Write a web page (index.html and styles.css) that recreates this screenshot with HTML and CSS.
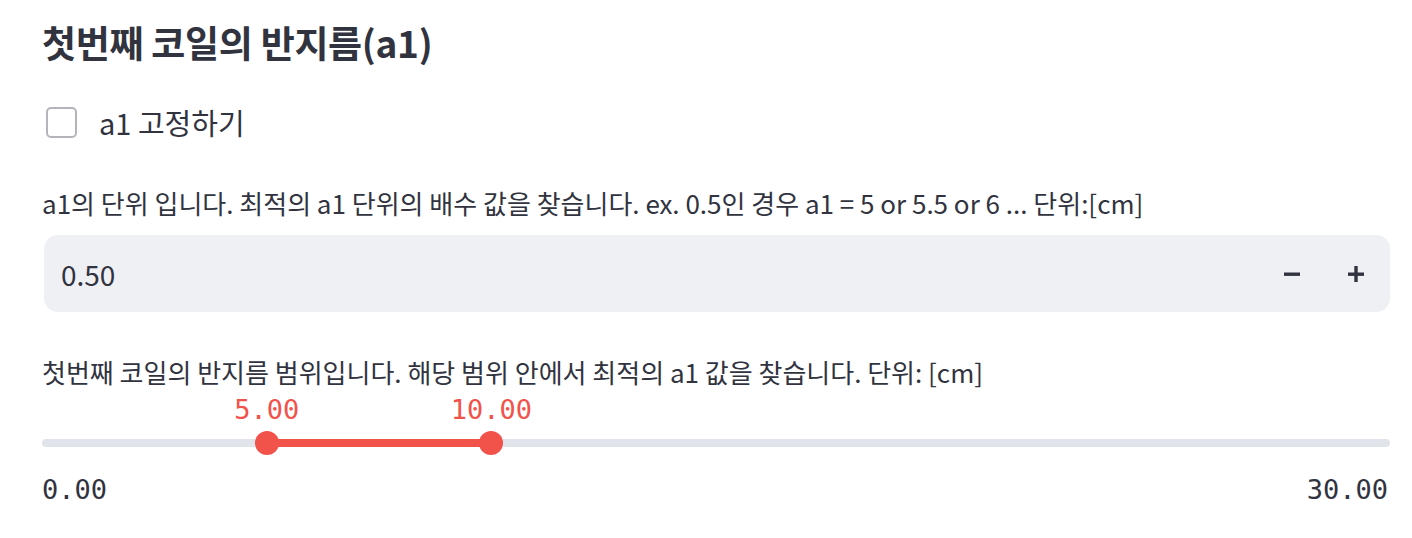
FILE: index.html
```html
<!DOCTYPE html>
<html>
  <head>
    <meta charset="utf-8">
    <title>a1 설정</title>
    <link rel="stylesheet" href="styles.css">
  </head>

  <body>
    <div id="main">
      <h3 class="title">첫번째 코일의 반지름(a1)</h3>

      <label class="check">
        <span class="box"></span>
        <span class="check_text">a1 고정하기</span>
      </label>

      <p class="label" id="step_label">a1의 단위 입니다. 최적의 a1 단위의 배수 값을 찾습니다. ex. 0.5인 경우 a1 = 5 or 5.5 or 6 ... 단위:[cm]</p>
      <div class="number">
        <span class="number_value">0.50</span>
        <div class="steps">
          <button class="step" aria-label="minus">
            <svg width="18" height="18" viewBox="0 0 18 18"><rect x="1" y="7.5" width="16" height="3.4" fill="#31333f"/></svg>
          </button>
          <button class="step" aria-label="plus">
            <svg width="18" height="18" viewBox="0 0 18 18"><rect x="1" y="7.5" width="16" height="3.4" fill="#31333f"/><rect x="7.3" y="1" width="3.4" height="16" fill="#31333f"/></svg>
          </button>
        </div>
      </div>

      <p class="label" id="range_label">첫번째 코일의 반지름 범위입니다. 해당 범위 안에서 최적의 a1 값을 찾습니다. 단위: [cm]</p>
      <div class="slider">
        <div class="track">
          <div class="fill" style="left: 16.667%; width: 16.667%;"></div>
          <div class="thumb" style="left: 16.667%;"><span class="thumb_value">5.00</span></div>
          <div class="thumb" style="left: 33.333%;"><span class="thumb_value">10.00</span></div>
        </div>
        <div class="ticks">
          <span>0.00</span>
          <span>30.00</span>
        </div>
      </div>
    </div>
  </body>
</html>
```

FILE: styles.css
```css
body {
  margin: 0;
  background: #fff;
  color: #31333f;
  font-family: 'Noto Sans CJK KR', 'Noto Sans', sans-serif;
}

#main {
  display: flex;
  flex-direction: column;
  padding: 0 22px 0 42px;
}

.title {
  margin: 0;
  height: 84px;
  line-height: 84px;
  font-size: 37px;
  font-weight: 700;
  letter-spacing: -0.3px;
}

.check {
  display: flex;
  align-items: center;
  gap: 22px;
  margin-top: 20px;
  height: 36px;
  padding-left: 4px;
}

.box {
  width: 27px;
  height: 27px;
  border: 2px solid #b4b5bb;
  border-radius: 5px;
}

.check_text {
  font-size: 29px;
  line-height: 36px;
}

.label {
  margin: 0;
  font-size: 26px;
  line-height: 30px;
}

#step_label {
  margin-top: 48px;
  margin-bottom: 17px;
}

.number {
  display: flex;
  align-items: center;
  justify-content: space-between;
  height: 77px;
  margin-left: 2px;
  background: #eef0f4;
  border-radius: 14px;
  padding: 0 25px 0 17px;
}

.number_value {
  font-size: 28px;
}

.steps {
  display: flex;
  gap: 46px;
}

.step {
  display: flex;
  border: none;
  background: none;
  padding: 0;
}

#range_label {
  margin-top: 45px;
}

.slider {
  display: flex;
  flex-direction: column;
  margin-top: 52px;
}

.track {
  position: relative;
  height: 8px;
  background: #e1e4ea;
  border-radius: 4px;
}

.fill {
  position: absolute;
  top: 0;
  height: 8px;
  background: #f1524a;
}

.thumb {
  position: absolute;
  top: -8px;
  width: 24px;
  height: 24px;
  margin-left: -12px;
  border-radius: 50%;
  background: #f1524a;
}

.thumb_value {
  position: absolute;
  bottom: 30px;
  left: 50%;
  transform: translateX(-50%);
  color: #f1524a;
  font-family: 'DejaVu Sans Mono', monospace;
  font-size: 27px;
  line-height: 30px;
}

.ticks {
  display: flex;
  justify-content: space-between;
  margin-top: 28px;
  padding-right: 2px;
  font-family: 'DejaVu Sans Mono', monospace;
  font-size: 27px;
  line-height: 30px;
}
```
